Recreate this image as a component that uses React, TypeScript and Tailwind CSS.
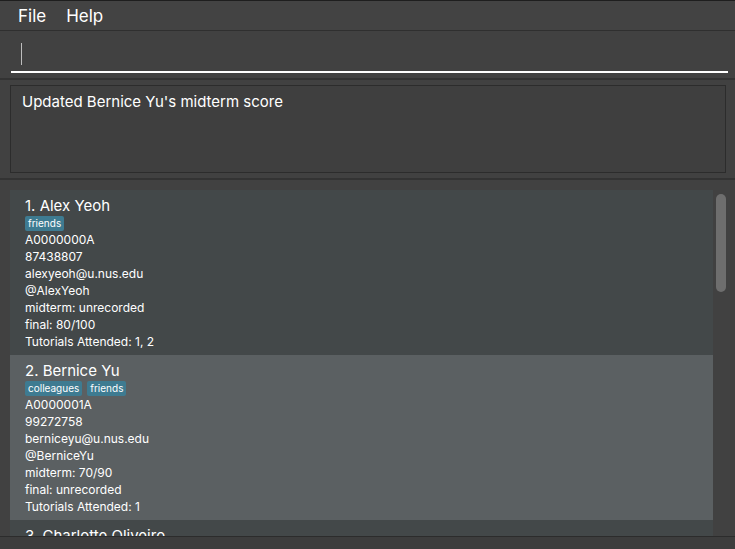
import React from "react";

type Person = {
  name: string;
  tags: string[];
  id: string;
  phone: string;
  email: string;
  tele: string;
  midterm: string;
  final: string;
  tutorials: string;
};

const people: Person[] = [
  {
    name: "1. Alex Yeoh",
    tags: ["friends"],
    id: "A0000000A",
    phone: "87438807",
    email: "alexyeoh@u.nus.edu",
    tele: "@AlexYeoh",
    midterm: "midterm: unrecorded",
    final: "final: 80/100",
    tutorials: "Tutorials Attended: 1, 2",
  },
  {
    name: "2. Bernice Yu",
    tags: ["colleagues", "friends"],
    id: "A0000001A",
    phone: "99272758",
    email: "berniceyu@u.nus.edu",
    tele: "@BerniceYu",
    midterm: "midterm: 70/90",
    final: "final: unrecorded",
    tutorials: "Tutorials Attended: 1",
  },
];

function Card({ p, bg }: { p: Person; bg: string }) {
  return (
    <div className={`${bg} h-[165px] shrink-0 pl-[15px] pt-[7px] text-white`}>
      <div className="text-[15px] leading-[18px]">{p.name}</div>
      <div className="flex gap-[5px] mt-[1px]">
        {p.tags.map((t) => (
          <span
            key={t}
            className="bg-[#3e7b91] text-[10px] leading-[15px] px-[3px] rounded-[2px] text-white"
          >
            {t}
          </span>
        ))}
      </div>
      <div className="text-[12px] leading-[17px]">
        <div>{p.id}</div>
        <div>{p.phone}</div>
        <div>{p.email}</div>
        <div>{p.tele}</div>
        <div>{p.midterm}</div>
        <div>{p.final}</div>
        <div>{p.tutorials}</div>
      </div>
    </div>
  );
}

export default function App() {
  return (
    <div
      className="w-[735px] h-[549px] bg-[#414141] border-t border-[#1e1e1e] flex flex-col overflow-hidden text-white"
      style={{ fontFamily: "Inter, 'Open Sans', sans-serif" }}
    >
      <div className="h-[30px] shrink-0 flex items-center gap-[20px] pl-[18px] pt-[2px] text-[17px] border-b border-[#2f2f2f] bg-[#434343]">
        <span>File</span>
        <span>Help</span>
      </div>
      <div className="h-[47px] shrink-0 pl-[11px] pr-[7px] pt-[12px] flex flex-col">
        <div className="h-[30px] border-b-2 border-white flex items-start pl-[10px]">
          <div className="w-[1px] h-[22px] bg-[#bdbdbd]" />
        </div>
      </div>
      <div className="h-[2px] shrink-0 bg-[#333333]" />
      <div className="pt-[5px] pl-[10px] pr-[9px] pb-[5px] shrink-0">
        <div className="h-[88px] border border-[#2c2c2c] bg-[#3f3f3f] pl-[11px] pt-[5px] text-[15px] leading-[22px]">
          Updated Bernice Yu's midterm score
        </div>
      </div>
      <div className="h-[2px] shrink-0 bg-[#333333]" />
      <div className="flex pt-[10px] pl-[10px] h-[356px] shrink-0">
        <div className="w-[703px] h-[346px] overflow-hidden flex flex-col">
          <Card p={people[0]} bg="bg-[#434849]" />
          <Card p={people[1]} bg="bg-[#5b6062]" />
          <div className="bg-[#434849] shrink-0 pl-[15px] pt-[7px] text-[15px] leading-[18px] h-[40px]">
            3. Charlotte Oliveiro
          </div>
        </div>
        <div className="w-[16px] pl-[3px] pt-[4px]">
          <div className="w-[10px] h-[98px] rounded-[5px] bg-[#6e6e6e]" />
        </div>
      </div>
      <div className="h-[1px] shrink-0 bg-[#2c2c2c]" />
      <div className="flex-1 bg-[#3d3d3d]" />
    </div>
  );
}
